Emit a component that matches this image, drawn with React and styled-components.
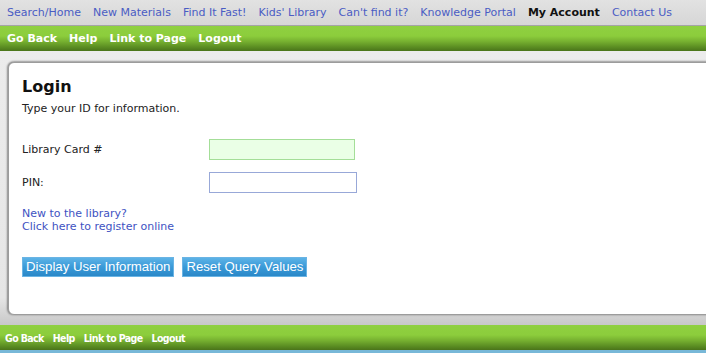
import React from "react";
import styled, { createGlobalStyle } from "styled-components";

const GlobalStyle = createGlobalStyle`
  html, body {
    margin: 0;
    padding: 0;
    overflow: hidden;
    background: #e9e9e9;
    font-family: "DejaVu Sans", Verdana, sans-serif;
  }
`;

const Page = styled.div`
  width: 706px;
  height: 353px;
  display: flex;
  flex-direction: column;
  overflow: hidden;
`;

const TopNav = styled.nav`
  height: 25px;
  display: flex;
  align-items: center;
  gap: 12px;
  padding-left: 7px;
  background: linear-gradient(#e2e2e2, #d6d6d6);
  border-bottom: 1px solid #a4a4a4;
  flex-shrink: 0;
`;

const TopLink = styled.a`
  font-size: 11px;
  color: ${(p) => (p.$active ? "#111" : "#4a5cc4")};
  font-weight: ${(p) => (p.$active ? "bold" : "normal")};
  text-decoration: none;
  white-space: nowrap;
`;

const GreenBar = styled.div`
  height: 25px;
  display: flex;
  align-items: center;
  gap: ${(p) => (p.$narrow ? "9px" : "12px")};
  padding-left: ${(p) => (p.$narrow ? "5px" : "7px")};
  background: linear-gradient(
    #8fd040 0%,
    #8ccd3c 40%,
    #76b030 62%,
    #5a8c22 85%,
    #4a741a 100%
  );
  flex-shrink: 0;
`;

const GreenLink = styled.a`
  color: #fff;
  font-weight: bold;
  font-size: ${(p) => (p.$narrow ? "10.5px" : "11px")};
  font-family: ${(p) =>
    p.$narrow
      ? `"DejaVu Sans Condensed", "Liberation Sans", sans-serif`
      : `"DejaVu Sans", Verdana, sans-serif`};
  letter-spacing: ${(p) => (p.$narrow ? "-0.6px" : "0")};
  text-decoration: none;
  white-space: nowrap;
`;

const Content = styled.main`
  flex: 1;
  padding: 11px 0 10px 8px;
  background: linear-gradient(#ececec, #e6e6e6 90%, #c8c8c8);
  display: flex;
`;

const Card = styled.section`
  flex: 1;
  margin-right: -20px;
  background: #fff;
  border: 1px solid #9c9c9c;
  border-radius: 6px;
  box-shadow: -1px 0 2px rgba(0, 0, 0, 0.35), 0 -1px 2px rgba(0, 0, 0, 0.25);
  padding: 13px 0 0 13px;
`;

const Title = styled.h1`
  margin: 0;
  font-size: 16px;
  line-height: 22px;
  font-weight: bold;
  color: #111;
`;

const Subtitle = styled.p`
  margin: 4px 0 0;
  font-size: 11px;
  line-height: 14px;
  color: #222;
`;

const Form = styled.div`
  margin-top: 23px;
  display: grid;
  grid-template-columns: 187px auto;
  row-gap: 12px;
  align-items: center;
`;

const Label = styled.label`
  font-size: 11px;
  color: #222;
`;

const Input = styled.input`
  box-sizing: border-box;
  width: ${(p) => p.$w}px;
  height: 21px;
  margin: 0;
  border: 1px solid ${(p) => (p.$focus ? "#a4de98" : "#98a8d8")};
  background: ${(p) => (p.$focus ? "#eaffe6" : "#fff")};
  outline: none;
`;

const Register = styled.a`
  display: block;
  margin-top: 14px;
  font-size: 11px;
  line-height: 13px;
  color: #3e52c2;
  text-decoration: none;
`;

const Buttons = styled.div`
  margin-top: 24px;
  display: flex;
  gap: 8px;
`;

const Button = styled.button`
  height: 20px;
  padding: 0 3px;
  border: 1px solid #6ab4e4;
  background: linear-gradient(#5cb2e6, #3a9ad8 50%, #2a88c8);
  color: #fff;
  font-family: "Liberation Sans", Arial, sans-serif;
  font-size: 13.2px;
  line-height: 18px;
  white-space: nowrap;
`;

const BlueEdge = styled.div`
  height: 3px;
  background: #78b8d8;
  flex-shrink: 0;
`;

const topLinks = [
  "Search/Home",
  "New Materials",
  "Find It Fast!",
  "Kids' Library",
  "Can't find it?",
  "Knowledge Portal",
  "My Account",
  "Contact Us",
];

const actions = ["Go Back", "Help", "Link to Page", "Logout"];

const ActionBar = ({ narrow }) => (
  <GreenBar $narrow={narrow}>
    {actions.map((a) => (
      <GreenLink key={a} href="#" $narrow={narrow}>
        {a}
      </GreenLink>
    ))}
  </GreenBar>
);

const App = () => {
  return (
    <>
      <GlobalStyle />
      <Page>
        <TopNav>
          {topLinks.map((l) => (
            <TopLink key={l} href="#" $active={l === "My Account"}>
              {l}
            </TopLink>
          ))}
        </TopNav>
        <ActionBar />
        <Content>
          <Card>
            <Title>Login</Title>
            <Subtitle>Type your ID for information.</Subtitle>
            <Form>
              <Label>Library Card #</Label>
              <Input $w={146} $focus />
              <Label>PIN:</Label>
              <Input $w={148} type="password" />
            </Form>
            <Register href="#">
              New to the library?
              <br />
              Click here to register online
            </Register>
            <Buttons>
              <Button>Display User Information</Button>
              <Button>Reset Query Values</Button>
            </Buttons>
          </Card>
        </Content>
        <ActionBar narrow />
        <BlueEdge />
      </Page>
    </>
  );
};

export default App;
